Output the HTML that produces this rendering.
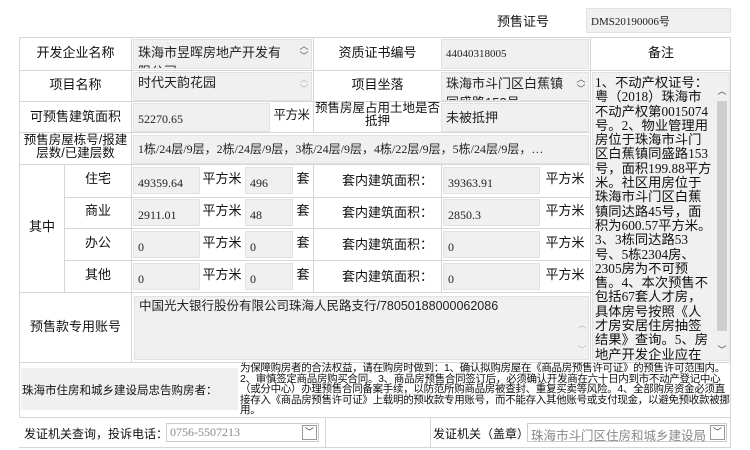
<!DOCTYPE html>
<html><head><meta charset="utf-8"><style>
*{margin:0;padding:0;box-sizing:border-box}
body{width:750px;height:450px;background:#fff;font-family:"Liberation Sans","Noto Sans CJK SC","WenQuanYi Zen Hei",sans-serif;font-size:12px;color:#111;position:relative;overflow:hidden}
.a{position:absolute}
.l{position:absolute;background:#d6d6d6}
.in{position:absolute;background:#f0f0f0;border:1px solid #e2e2e2;color:#222;padding:2px 4px;line-height:15px;overflow:hidden;font-family:"Liberation Serif","Noto Sans CJK SC",serif}
.c{position:absolute;text-align:center;line-height:14px}
.sb{position:absolute;width:12px;color:#999;font-size:9px;line-height:10px;text-align:center}
</style></head><body>
<div class="a" style="left:497px;top:11px;font-size:13px">预售证号</div>
<div class="in" style="left:586px;top:8px;width:145px;height:25px;padding-top:6px;font-size:11px">DMS20190006号</div>

<div class="l" style="left:19px;top:37px;width:712px;height:1px"></div>
<div class="l" style="left:19px;top:37px;width:1px;height:381px"></div>
<div class="l" style="left:730px;top:37px;width:1px;height:410px"></div>
<div class="l" style="left:19px;top:70px;width:712px;height:1px"></div>
<div class="l" style="left:19px;top:101px;width:572px;height:1px"></div>
<div class="l" style="left:19px;top:132px;width:572px;height:1px"></div>
<div class="l" style="left:19px;top:164px;width:572px;height:1px"></div>
<div class="l" style="left:64px;top:197px;width:527px;height:1px"></div>
<div class="l" style="left:64px;top:228px;width:527px;height:1px"></div>
<div class="l" style="left:64px;top:260px;width:527px;height:1px"></div>
<div class="l" style="left:19px;top:292px;width:572px;height:1px"></div>
<div class="l" style="left:19px;top:362px;width:712px;height:1px"></div>
<div class="l" style="left:19px;top:417px;width:712px;height:1px"></div>
<div class="l" style="left:19px;top:447px;width:712px;height:1px"></div>
<div class="l" style="left:131px;top:37px;width:1px;height:325px"></div>
<div class="l" style="left:313px;top:37px;width:1px;height:65px"></div>
<div class="l" style="left:313px;top:101px;width:1px;height:31px"></div>
<div class="l" style="left:313px;top:164px;width:1px;height:128px"></div>
<div class="l" style="left:441px;top:164px;width:1px;height:128px"></div>
<div class="l" style="left:590px;top:37px;width:1px;height:325px"></div>
<div class="l" style="left:64px;top:164px;width:1px;height:128px"></div>
<div class="l" style="left:325px;top:417px;width:1px;height:30px"></div>
<div class="l" style="left:430px;top:417px;width:1px;height:30px"></div>

<div class="c" style="left:20px;top:46px;width:111px;font-size:13px">开发企业名称</div>
<div class="in" style="left:133px;top:39px;width:179px;height:30px;font-family:'Liberation Sans','Noto Sans CJK SC',sans-serif;font-size:13px;line-height:19px;padding-top:3px;padding-right:20px">珠海市昱晖房地产开发有限公司</div>
<div class="sb" style="left:298px;top:41px;color:#555">︿<br>﹀</div>
<div class="c" style="left:314px;top:46px;width:127px;font-size:13px">资质证书编号</div>
<div class="in" style="left:441px;top:39px;width:148px;height:30px;padding-top:7px;font-size:11px">44040318005</div>
<div class="c" style="left:591px;top:46px;width:140px;font-size:13px">备注</div>

<div class="c" style="left:20px;top:78px;width:111px;font-size:13px">项目名称</div>
<div class="in" style="left:133px;top:72px;width:179px;height:29px;font-family:'Liberation Sans','Noto Sans CJK SC',sans-serif;font-size:13px">时代天韵花园</div>
<div class="sb" style="left:298px;top:74px;color:#bbb">︿<br>﹀</div>
<div class="c" style="left:314px;top:78px;width:127px;font-size:13px">项目坐落</div>
<div class="in" style="left:441px;top:72px;width:148px;height:29px;font-family:'Liberation Sans','Noto Sans CJK SC',sans-serif;font-size:13px;line-height:19px;padding-top:1px;padding-right:20px">珠海市斗门区白蕉镇同盛路153号</div>
<div class="sb" style="left:575px;top:74px;color:#555">︿<br>﹀</div>

<div class="c" style="left:20px;top:110px;width:111px;font-size:13px">可预售建筑面积</div>
<div class="in" style="left:133px;top:103px;width:137px;height:29px;padding-top:8px">52270.65</div>
<div class="c" style="left:270px;top:108px;width:43px;font-size:12.5px;letter-spacing:-0.5px">平方米</div>
<div class="c" style="left:314px;top:102px;width:127px;font-size:12.5px;line-height:13px">预售房屋占用土地是否抵押</div>
<div class="in" style="left:441px;top:103px;width:148px;height:29px;padding-top:6px;font-family:'Liberation Sans','Noto Sans CJK SC',sans-serif;font-size:13px">未被抵押</div>

<div class="c" style="left:20px;top:134px;width:111px;font-size:12.5px;line-height:13px">预售房屋栋号/报建层数/已建层数</div>
<div class="in" style="left:133px;top:135px;width:456px;height:29px;padding-top:6px;white-space:nowrap;font-size:12px">1栋/24层/9层，2栋/24层/9层，3栋/24层/9层，4栋/22层/9层，5栋/24层/9层，…</div>

<div class="c" style="left:20px;top:220px;width:44px;font-size:13px">其中</div>
<div class="c" style="left:65px;top:172px;width:66px;font-size:13px">住宅</div>
<div class="c" style="left:65px;top:204px;width:66px;font-size:13px">商业</div>
<div class="c" style="left:65px;top:236px;width:66px;font-size:13px">办公</div>
<div class="c" style="left:65px;top:268px;width:66px;font-size:13px">其他</div>

<div class="in" style="left:133px;top:167px;width:67px;height:27px;padding-top:8px">49359.64</div>
<div class="in" style="left:133px;top:199px;width:67px;height:27px;padding-top:8px">2911.01</div>
<div class="in" style="left:133px;top:231px;width:67px;height:27px;padding-top:8px">0</div>
<div class="in" style="left:133px;top:263px;width:67px;height:27px;padding-top:8px">0</div>
<div class="c" style="left:200px;top:172px;width:44px;font-size:13px">平方米</div>
<div class="c" style="left:200px;top:204px;width:44px;font-size:13px">平方米</div>
<div class="c" style="left:200px;top:236px;width:44px;font-size:13px">平方米</div>
<div class="c" style="left:200px;top:268px;width:44px;font-size:13px">平方米</div>
<div class="in" style="left:245px;top:167px;width:48px;height:27px;padding-top:8px">496</div>
<div class="in" style="left:245px;top:199px;width:48px;height:27px;padding-top:8px">48</div>
<div class="in" style="left:245px;top:231px;width:48px;height:27px;padding-top:8px">0</div>
<div class="in" style="left:245px;top:263px;width:48px;height:27px;padding-top:8px">0</div>
<div class="c" style="left:293px;top:172px;width:20px;font-size:13px">套</div>
<div class="c" style="left:293px;top:204px;width:20px;font-size:13px">套</div>
<div class="c" style="left:293px;top:236px;width:20px;font-size:13px">套</div>
<div class="c" style="left:293px;top:268px;width:20px;font-size:13px">套</div>
<div class="c" style="left:314px;top:174px;width:127px;font-size:13px;padding-left:20px">套内建筑面积：</div>
<div class="c" style="left:314px;top:206px;width:127px;font-size:13px;padding-left:20px">套内建筑面积：</div>
<div class="c" style="left:314px;top:238px;width:127px;font-size:13px;padding-left:20px">套内建筑面积：</div>
<div class="c" style="left:314px;top:270px;width:127px;font-size:13px;padding-left:20px">套内建筑面积：</div>
<div class="in" style="left:443px;top:167px;width:97px;height:27px;padding-top:8px">39363.91</div>
<div class="in" style="left:443px;top:199px;width:97px;height:27px;padding-top:8px">2850.3</div>
<div class="in" style="left:443px;top:231px;width:97px;height:27px;padding-top:8px">0</div>
<div class="in" style="left:443px;top:263px;width:97px;height:27px;padding-top:8px">0</div>
<div class="c" style="left:540px;top:172px;width:50px;font-size:13px">平方米</div>
<div class="c" style="left:540px;top:204px;width:50px;font-size:13px">平方米</div>
<div class="c" style="left:540px;top:236px;width:50px;font-size:13px">平方米</div>
<div class="c" style="left:540px;top:268px;width:50px;font-size:13px">平方米</div>

<div class="in" style="left:592px;top:72px;width:138px;height:289px;font-family:'Liberation Serif','Noto Sans CJK SC',sans-serif;font-size:13.3px;line-height:14.3px;padding:3px 17px 0 2px;color:#111">1、不动产权证号：粤（2018）珠海市不动产权第0015074号。2、物业管理用房位于珠海市斗门区白蕉镇同盛路153号，面积199.88平方米。社区用房位于珠海市斗门区白蕉镇同达路45号，面积为600.57平方米。3、3栋同达路53号、5栋2304房、2305房为不可预售。4、本次预售不包括67套人才房，具体房号按照《人才房安居住房抽签结果》查询。5、房地产开发企业应在销售现场公示建设工程设计方案总平面</div>
<div class="a" style="left:717px;top:101px;width:10px;height:230px;background:#cdcdcd"></div>
<div class="sb" style="left:716px;top:86px;color:#444">︿</div>
<div class="sb" style="left:716px;top:345px;color:#444">﹀</div>

<div class="c" style="left:20px;top:320px;width:111px;font-size:13px">预售款专用账号</div>
<div class="in" style="left:134px;top:296px;width:455px;height:64px;font-family:'Liberation Sans','Noto Sans CJK SC',sans-serif;font-size:12.5px">中国光大银行股份有限公司珠海人民路支行/78050188000062086</div>
<div class="sb" style="left:576px;top:320px;color:#bbb">︿</div>
<div class="sb" style="left:576px;top:345px;color:#bbb">﹀</div>

<div class="a" style="left:21px;top:368px;width:217px;height:42px;background:#f0f0f0"></div>
<div class="a" style="left:22px;top:382px;font-size:11.5px;white-space:nowrap">珠海市住房和城乡建设局忠告购房者：</div>
<div class="a" style="left:240px;top:363px;width:490px;font-size:10.5px;line-height:10.5px;letter-spacing:-0.3px">为保障购房者的合法权益，请在购房时做到：1、确认拟购房屋在《商品房预售许可证》的预售许可范围内。2、审慎签定商品房购买合同。3、商品房预售合同签订后，必须确认开发商在六十日内到市不动产登记中心（或分中心）办理预售合同备案手续，以防范所购商品房被查封、重复买卖等风险。4、全部购房资金必须直接存入《商品房预售许可证》上载明的预收款专用账号，而不能存入其他账号或支付现金，以避免预收款被挪用。</div>

<div class="a" style="left:24px;top:425px;font-size:12px">发证机关查询，投诉电话：</div>
<div class="a" style="left:166px;top:423px;width:153px;height:19px;border:1px solid #ccc;color:#888;padding:1px 3px;font-size:12px;font-family:'Liberation Serif',serif">0756-5507213</div>
<div class="a" style="left:302px;top:425px;width:15px;height:15px;border:1px solid #999;font-size:9px;text-align:center;line-height:13px;color:#333">﹀</div>
<div class="a" style="left:433px;top:425px;font-size:12px">发证机关（盖章）</div>
<div class="a" style="left:527px;top:423px;width:200px;height:19px;border:1px solid #ccc;color:#888;padding:1px 3px;font-size:12.5px">珠海市斗门区住房和城乡建设局</div>
<div class="a" style="left:710px;top:425px;width:15px;height:15px;border:1px solid #999;font-size:9px;text-align:center;line-height:13px;color:#333">﹀</div>
</body></html>
